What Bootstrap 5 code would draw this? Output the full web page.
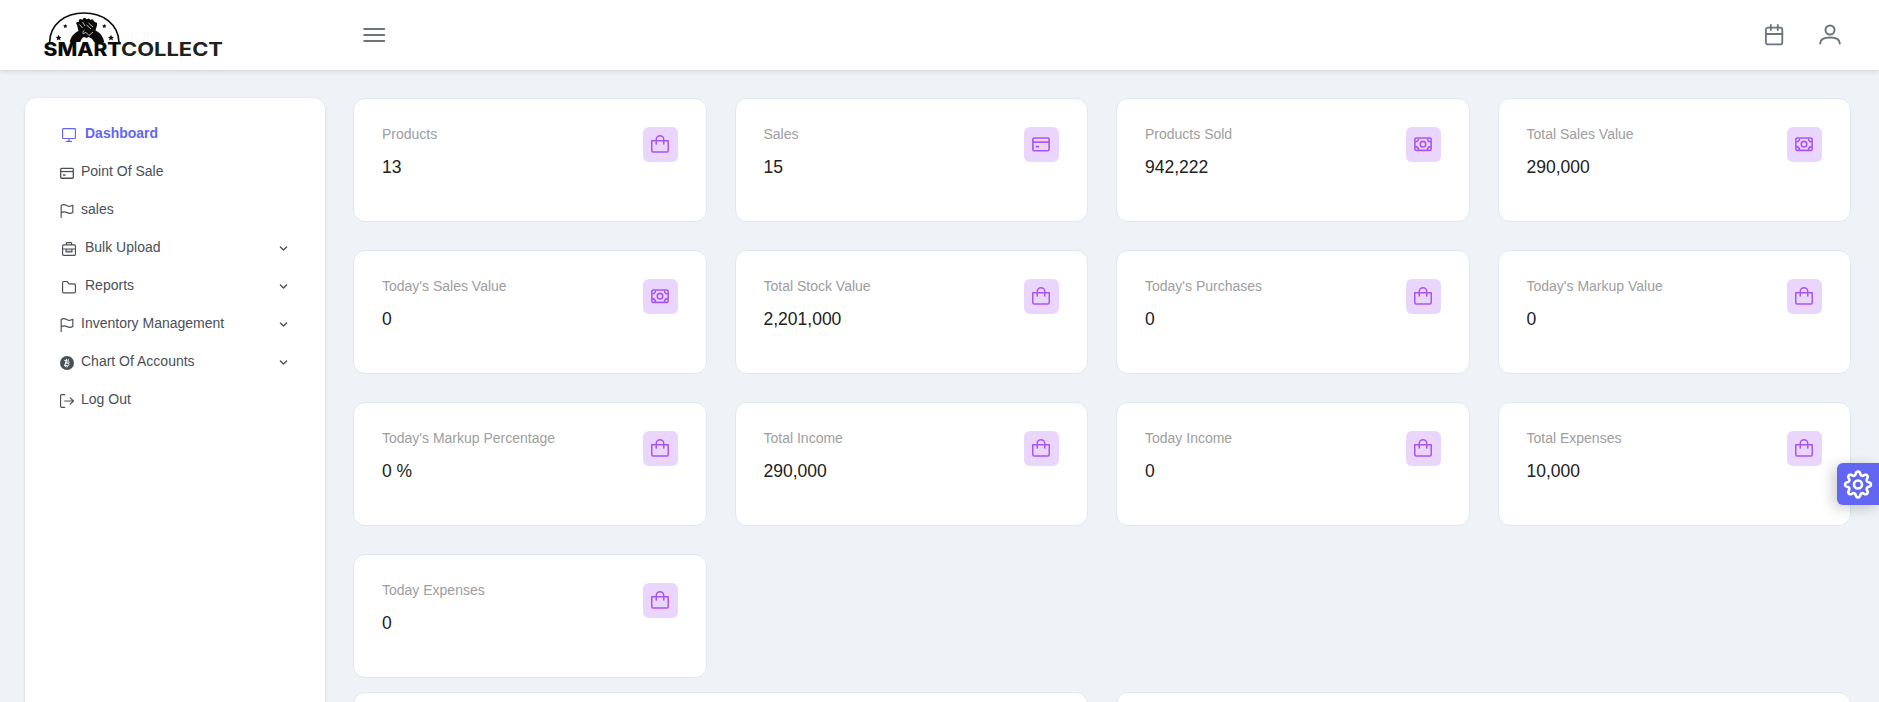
<!DOCTYPE html>
<html lang="en">
<head>
<meta charset="utf-8">
<meta name="viewport" content="width=device-width, initial-scale=1">
<title>SmartCollect</title>
<link href="https://cdn.jsdelivr.net/npm/bootstrap@5.3.0/dist/css/bootstrap.min.css" rel="stylesheet">
<style>
html{font-size:14px}
body{font-family:"Liberation Sans",Arial,sans-serif;background:#eff3f8;color:#495057;height:100vh;overflow:hidden}
.topbar{height:70px;padding:0 38px 0 41px;color:#6c757d;box-shadow:0 3px 5px rgba(0,0,0,.04),0 0 2px rgba(0,0,0,.05),0 1px 4px rgba(0,0,0,.08)}
.brand{width:321px}
.shell{height:calc(100vh - 70px);overflow:hidden;padding:28px 28px 0 25px;gap:28px}
.side{width:300px;height:650px;border-radius:12px;padding:16.5px 21px;box-shadow:0 3px 5px rgba(0,0,0,.02),0 0 2px rgba(0,0,0,.05),0 1px 4px rgba(0,0,0,.08)}
.side .nav-link{height:38px;padding:0 14px;color:#495057;line-height:16px}
.side .nav-link span{padding-bottom:2px}
.side .nav-link svg.lead-icon{width:14px;height:14px;margin-right:7px;margin-top:2px}
.side .nav-link.roomy svg.lead-icon{margin-left:2px;margin-right:9px}
.side .nav-link.active{color:#6366f1;font-weight:700}
.side .chev{width:11px;height:11px;margin-left:auto;margin-right:1px;margin-top:2px}
.tiles{--bs-gutter-x:28px;--bs-gutter-y:28px}
.tile{height:124px;border:1px solid #dfe7ef;border-radius:12px;padding:28px}
.tile .cap{color:#9e9e9e;line-height:14px;margin-bottom:16px}
.tile .num{color:#212121;font-size:17.5px;line-height:20px}
.chip{width:35px;height:35px;border-radius:6px;background:#ead6fd;color:#a855f7}
.chip svg{width:18px;height:18px;margin:0 1px 1px 0}
.lower{margin-top:14px}
.cog{position:fixed;right:0;top:463px;width:42px;height:42px;background:#6366f1;color:#fff;border-radius:6px 0 0 6px;box-shadow:-4px 3px 14px rgba(0,0,0,.2)}
svg{flex:none}
</style>
</head>
<body>
<svg width="0" height="0" class="position-absolute" fill="none" stroke="currentColor">
  <symbol id="i-bag" viewBox="0 0 24 24"><g fill="none" stroke="currentColor" stroke-width="2" stroke-linecap="round"><path d="M1 7.500h22v13a2 2 0 0 1-2 2H3a2 2 0 0 1-2-2z" stroke-linejoin="round"/><path d="M7 12V6a5 5 0 0 1 10 0v6"/></g></symbol>
  <symbol id="i-card" viewBox="0 0 24 24"><g fill="none" stroke="currentColor" stroke-width="2.200"><rect x="1.200" y="4" width="21.600" height="17" rx="1.600"/><path d="M1 9.500h22"/><path d="M5 15.500h4.500" stroke-width="2.400"/></g></symbol>
  <symbol id="i-cash" viewBox="0 0 24 24"><g fill="none" stroke="currentColor" stroke-width="2.100"><rect x="1.200" y="4" width="21.600" height="16.500" rx="1.600"/><circle cx="12" cy="12.200" r="3.700"/><path d="M1.500 9C4.500 9 6 7.500 6 4.500M22.500 9C19.500 9 18 7.500 18 4.500M1.500 15.500C4.500 15.500 6 17 6 20M22.500 15.500C19.500 15.500 18 17 18 20"/></g></symbol>
  <symbol id="i-desktop" viewBox="0 0 24 24"><g fill="none" stroke="currentColor" stroke-width="2" stroke-linecap="round"><rect x="1" y="1" width="22" height="17" rx="1.400"/><path d="M12 18v5M7.500 23h9"/></g></symbol>
  <symbol id="i-flag" viewBox="0 0 24 24"><path d="M2 23V2.500C7-.5 9 1 12 2.800S18 4.500 22 2.200V14.500C18 17 15.500 16.500 12 14.800S6 12.500 2 15" fill="none" stroke="currentColor" stroke-width="2" stroke-linecap="round" stroke-linejoin="round"/></symbol>
  <symbol id="i-case" viewBox="0 0 24 24"><g fill="none" stroke="currentColor" stroke-width="2"><rect x="1" y="5" width="22" height="18" rx="1.800"/><path d="M7.500 5V2.500A1.500 1.500 0 0 1 9 1h6a1.500 1.500 0 0 1 1.500 1.500V5M1 12h22"/><path d="M7 12v5h10v-5" fill="currentColor" fill-opacity=".25"/></g></symbol>
  <symbol id="i-folder" viewBox="0 0 24 24"><path d="M3 2.500h5.500l3.500 4h9a2 2 0 0 1 2 2V20a2 2 0 0 1-2 2H3a2 2 0 0 1-2-2V4.500a2 2 0 0 1 2-2z" fill="none" stroke="currentColor" stroke-width="2" stroke-linejoin="round"/></symbol>
  <symbol id="i-coin" viewBox="0 0 24 24"><circle cx="12" cy="12" r="12" fill="currentColor"/><path d="M10.800 6.500 8.300 17M7.500 7.500l6 1.200c3.500.8 2.500 4.200-.5 3.600l-3-.6 3 .6c3.800.9 2.800 5-.8 4.300l-5.200-1.100M11.500 5l-.6 2.500M14.500 5.500l-.6 2.500M9.500 16.500 9 19M12.500 17l-.6 2.500" fill="none" stroke="#fff" stroke-width="1.700"/></symbol>
  <symbol id="i-out" viewBox="0 0 24 24"><path d="M8 1H3a2 2 0 0 0-2 2v18a2 2 0 0 0 2 2h5M8 12h15M17.500 6.500 23 12l-5.500 5.500" fill="none" stroke="currentColor" stroke-width="2" stroke-linecap="round" stroke-linejoin="round"/></symbol>
  <symbol id="i-chev" viewBox="0 0 11 11"><path d="m2.400 3.900 3.100 3 3.100-3" fill="none" stroke="currentColor" stroke-width="1.400" stroke-linecap="round" stroke-linejoin="round"/></symbol>
</svg>

<header class="topbar bg-white d-flex align-items-center position-relative">
  <a class="brand d-block" href="#" aria-label="SmartCollect">
    <svg class="d-block" width="186" height="52" viewBox="41 8 186 52">
      <path d="M49.600 41.500C50 23 65 12 84 12s34.500 11 35 29.500" fill="none" stroke="#0b0b08" stroke-width="1.600"/>
      <g fill="#0b0b08">
        <path d="M69.800 41c.7-4.500 4-9 8.700-11l-1.500-6 2-3.500 3.500-2 3-.5 4 .5 5 2 2.500 4-1.500 5c5 2 8 7 8.700 11.500H94c-1-2.500-3-4.500-5.500-5l-2 1-2.500-1c-2 1-3 2.500-3.700 5z"/>
        <circle cx="78" cy="22.500" r="1.700"/><circle cx="80.500" cy="19.700" r="1.700"/><circle cx="84.500" cy="18.400" r="1.600"/><circle cx="88.500" cy="19" r="1.600"/><circle cx="92" cy="20" r="1.700"/><circle cx="95.500" cy="23" r="1.700"/>
        <path id="star" d="m58.600 33.700.9 2 2.100.2-1.600 1.400.5 2.100-1.900-1.100-1.900 1.100.5-2.100-1.600-1.400 2.100-.2z"/>
        <use href="#star" x="52.400"/>
        <path id="star2" d="m65.300 22.900.7 1.400 1.500.2-1.100 1 .3 1.500-1.400-.7-1.400.7.300-1.500-1.100-1 1.500-.2z"/>
        <use href="#star2" x="39"/>
      </g>
      <path d="m79.500 23.500 3 3.500M82.500 21l2.500 4M88.500 22l4.500 4M86.500 24l4.500 4M84.500 29c-2 1.500-2 3-.8 4l1.800-2 3.500 3.500 4-3.500" fill="none" stroke="#fff" stroke-width=".7"/>
      <text x="43.600" y="55.400" font-family="Inter,sans-serif" font-weight="800" font-size="18.200" textLength="78" lengthAdjust="spacingAndGlyphs" fill="#0b0b08">SMART</text>
      <text x="121" y="55.400" font-family="Inter,sans-serif" font-weight="700" font-size="18.200" textLength="102" lengthAdjust="spacingAndGlyphs" fill="#20221a">COLLECT</text>
    </svg>
  </a>
  <svg width="24" height="22" viewBox="0 0 24 22" stroke="currentColor" stroke-width="2" stroke-linecap="round"><path d="M2.200 5h20M2.200 11h20M2.200 17h20"/></svg>
  <div class="ms-auto d-flex align-items-center">
    <svg width="20" height="22" viewBox="0 0 20 22" fill="none" stroke="currentColor" stroke-width="1.800" stroke-linecap="round"><rect x="1.900" y="3.600" width="16.400" height="16.800" rx="2"/><path d="M2 10h16.400M6.800 1v5M13.800 1v5"/></svg>
    <svg style="margin-left:35px" width="22" height="22" viewBox="0 0 22 22" fill="none" stroke="currentColor" stroke-width="2" stroke-linecap="round"><circle cx="11" cy="6" r="4.500"/><path d="M1.200 19.500c0-5 4-6 9.800-6s9.800 1 9.800 6"/></svg>
  </div>
</header>

<div class="shell d-flex">
  <aside class="side bg-white flex-shrink-0">
    <nav class="nav flex-column flex-nowrap" id="menu"></nav>
  </aside>
  <main class="flex-grow-1">
    <div class="row tiles" id="tiles"></div>
    <div class="row tiles lower">
      <div class="col-6 mt-0"><div class="tile bg-white"></div></div>
      <div class="col-6 mt-0"><div class="tile bg-white"></div></div>
    </div>
  </main>
</div>

<button class="cog border-0 p-0 d-flex align-items-center justify-content-center" aria-label="Settings">
  <svg width="30" height="30" viewBox="0 0 30 29" fill="none" stroke="currentColor" stroke-width="2.600" stroke-linejoin="round"><circle cx="15" cy="15" r="4"/><path id="gear"/></svg>
</button>

<script src="https://cdn.jsdelivr.net/npm/bootstrap@5.3.0/dist/js/bootstrap.bundle.min.js"></script>
<script>
const menu=[["Dashboard","desktop","roomy active"],["Point Of Sale","card",""],["sales","flag",""],["Bulk Upload","case","roomy",1],["Reports","folder","roomy",1],["Inventory Management","flag","",1],["Chart Of Accounts","coin","",1],["Log Out","out",""]];
document.getElementById("menu").innerHTML=menu.map(([t,i,c,sub])=>`<a class="nav-link d-flex align-items-center ${c}" href="#"><svg class="lead-icon"><use href="#i-${i}"/></svg><span>${t}</span>${sub?'<svg class="chev"><use href="#i-chev"/></svg>':""}</a>`).join("");
const tiles=[["Products","13","bag"],["Sales","15","card"],["Products Sold","942,222","cash"],["Total Sales Value","290,000","cash"],["Today's Sales Value","0","cash"],["Total Stock Value","2,201,000","bag"],["Today's Purchases","0","bag"],["Today's Markup Value","0","bag"],["Today's Markup Percentage","0 %","bag"],["Total Income","290,000","bag"],["Today Income","0","bag"],["Total Expenses","10,000","bag"],["Today Expenses","0","bag"]];
document.getElementById("tiles").innerHTML=tiles.map(([t,n,i])=>`<div class="col-3"><div class="tile bg-white d-flex justify-content-between"><div><div class="cap">${t}</div><div class="num">${n}</div></div><div class="chip d-flex align-items-center justify-content-center"><svg><use href="#i-${i}"/></svg></div></div></div>`).join("");
// Eight-lobed gear outline
let d="";
for(let k=0;k<=160;k++){const a=k/160*2*Math.PI,w=Math.cos(8*a),r=11.2+1.7*Math.sign(w)*Math.pow(Math.abs(w),.6);d+=(k?"L":"M")+(15+r*Math.cos(a)).toFixed(2)+" "+(15+r*Math.sin(a)).toFixed(2)}
document.getElementById("gear").setAttribute("d",d+"Z");
</script>
</body>
</html>
